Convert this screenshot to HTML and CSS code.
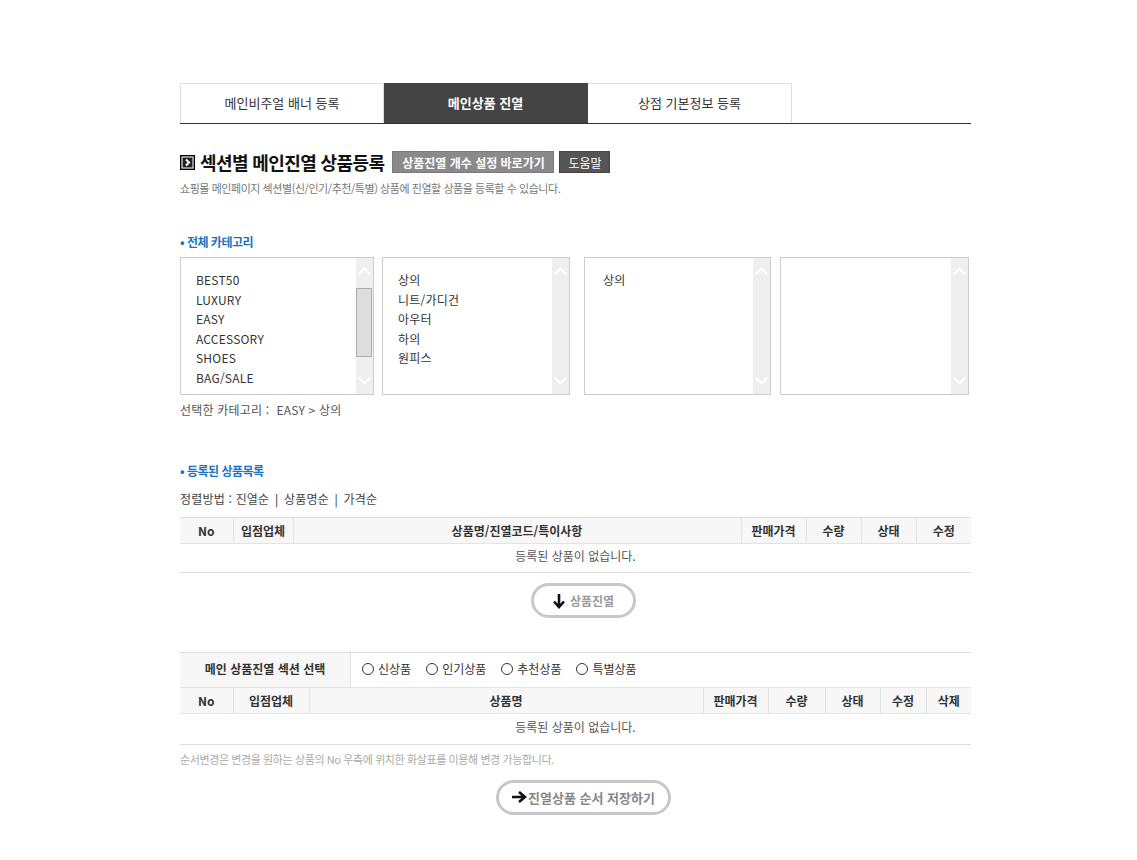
FILE: index.html
```html
<!DOCTYPE html>
<html lang="ko">
<head>
<meta charset="utf-8">
<title>섹션별 메인진열 상품등록</title>
<link rel="stylesheet" href="styles.css">
</head>
<body>
<div class="wrap">
  <div class="tabs">
    <div class="tab">메인비주얼 배너 등록</div>
    <div class="tab active">메인상품 진열</div>
    <div class="tab">상점 기본정보 등록</div>
  </div>

  <div class="title-row">
    <span class="title-icon"><svg width="15" height="15" viewBox="0 0 15 15"><rect x="0.5" y="0.5" width="14" height="14" fill="#222" stroke="#000"/><rect x="2" y="2" width="11" height="11" fill="none" stroke="#fff" stroke-width="1"/><path d="M6 4.5 L9 7.5 L6 10.5" fill="none" stroke="#fff" stroke-width="2"/></svg></span>
    <h1 class="title">섹션별 메인진열 상품등록</h1>
    <span class="btn btn-gray">상품진열 개수 설정 바로가기</span>
    <span class="btn btn-dark">도움말</span>
  </div>
  <p class="desc">쇼핑몰 메인페이지 섹션별(신/인기/추천/특별) 상품에 진열할 상품을 등록할 수 있습니다.</p>

  <h2 class="sub">• 전체 카테고리</h2>
  <div class="cats">
    <div class="lbox w1">
      <ul class="items">
        <li>BEST50</li><li>LUXURY</li><li>EASY</li><li>ACCESSORY</li><li>SHOES</li><li>BAG/SALE</li>
      </ul>
      <div class="sbar"><span class="up"></span><span class="thumb"></span><span class="down"></span></div>
    </div>
    <div class="lbox w2">
      <ul class="items">
        <li>상의</li><li>니트/가디건</li><li>아우터</li><li>하의</li><li>원피스</li>
      </ul>
      <div class="sbar"><span class="up"></span><span class="down"></span></div>
    </div>
    <div class="lbox w3">
      <ul class="items">
        <li>상의</li>
      </ul>
      <div class="sbar"><span class="up"></span><span class="down"></span></div>
    </div>
    <div class="lbox w4">
      <ul class="items"></ul>
      <div class="sbar"><span class="up"></span><span class="down"></span></div>
    </div>
  </div>
  <p class="selected">선택한 카테고리 : &nbsp;EASY &gt; 상의</p>

  <h2 class="sub sub2">• 등록된 상품목록</h2>
  <p class="sort">정렬방법 : 진열순 <span class="bar">|</span> 상품명순 <span class="bar">|</span> 가격순</p>

  <table class="grid g1">
    <colgroup><col style="width:53px"><col style="width:60px"><col><col style="width:65px"><col style="width:55px"><col style="width:55px"><col style="width:55px"></colgroup>
    <thead><tr><th>No</th><th>입점업체</th><th>상품명/진열코드/특이사항</th><th>판매가격</th><th>수량</th><th>상태</th><th>수정</th></tr></thead>
    <tbody><tr><td colspan="7" class="empty">등록된 상품이 없습니다.</td></tr></tbody>
  </table>

  <div class="btn-row">
    <span class="pill pill1"><svg width="14" height="16" viewBox="0 0 14 16"><path d="M7 1 V13 M2 8.5 L7 14 L12 8.5" fill="none" stroke="#111" stroke-width="2.6"/></svg>상품진열</span>
  </div>

  <div class="section-select">
    <div class="sel-label">메인 상품진열 섹션 선택</div>
    <div class="radios">
      <label><span class="radio"></span>신상품</label>
      <label><span class="radio"></span>인기상품</label>
      <label><span class="radio"></span>추천상품</label>
      <label><span class="radio"></span>특별상품</label>
    </div>
  </div>
  <table class="grid g2">
    <colgroup><col style="width:53px"><col style="width:76px"><col><col style="width:65px"><col style="width:57px"><col style="width:55px"><col style="width:46px"><col style="width:45px"></colgroup>
    <thead><tr><th>No</th><th>입점업체</th><th>상품명</th><th>판매가격</th><th>수량</th><th>상태</th><th>수정</th><th>삭제</th></tr></thead>
    <tbody><tr><td colspan="8" class="empty">등록된 상품이 없습니다.</td></tr></tbody>
  </table>
  <p class="note">순서변경은 변경을 원하는 상품의 No 우측에 위치한 화살표를 이용해 변경 가능합니다.</p>

  <div class="btn-row btn-row2">
    <span class="pill pill2"><svg width="16" height="14" viewBox="0 0 16 14"><path d="M1 7 H13 M8 2 L14 7 L8 12" fill="none" stroke="#111" stroke-width="2.6"/></svg>진열상품 순서 저장하기</span>
  </div>
</div>
</body>
</html>
```

FILE: styles.css
```css
* { box-sizing: border-box; }
html, body { margin: 0; padding: 0; background: #fff; }
body {
  font-family: "Noto Sans CJK KR", "Noto Sans", "Liberation Sans", sans-serif;
  font-size: 12px;
  color: #333;
}
.wrap {
  width: 791px;
  margin-left: 180px;
  padding-top: 83px;
}

/* tabs */
.tabs {
  display: flex;
  border-bottom: 1px solid #333;
}
.tab {
  width: 204px;
  height: 40px;
  line-height: 38px;
  text-align: center;
  border: 1px solid #ddd;
  border-bottom: 0;
  font-size: 13px;
  color: #333;
}
.tab + .tab { border-left: 0; }
.tab.active {
  background: #444;
  border-color: #444;
  color: #fff;
  font-weight: bold;
}

/* title */
.title-row {
  display: flex;
  align-items: center;
  margin-top: 27px;
  height: 22px;
}
.title-icon { width: 15px; height: 15px; display: flex; margin-right: 5px; }
.title {
  margin: 0 8px 0 0;
  font-size: 18px;
  font-weight: bold;
  letter-spacing: -0.6px;
  color: #111;
  line-height: 22px;
}
.btn {
  display: inline-block;
  height: 22px;
  line-height: 21px;
  color: #fff;
  font-size: 12px;
  font-weight: bold;
  margin-right: 5px;
  border: 1px solid transparent;
  text-align: center;
}
.btn-gray { background: #8a8a8a; border-color: #7a7a7a; width: 162px; }
.btn-dark { background: #555; border-color: #444; width: 51px; font-weight: normal; }
.desc {
  margin: 7px 0 0;
  font-size: 11px;
  color: #777;
  letter-spacing: -0.45px;
}

/* sub headings */
.sub {
  margin: 38px 0 0;
  font-size: 12px;
  font-weight: bold;
  color: #1a73c0;
  letter-spacing: -0.5px;
  line-height: 16px;
}

/* category boxes */
.cats {
  display: flex;
  margin-top: 7px;
  height: 138px;
}
.lbox {
  display: flex;
  border: 1px solid #ccc;
  height: 138px;
  background: #fff;
}
.w1 { width: 194px; margin-right: 8px; }
.w2 { width: 188px; margin-right: 14px; }
.w3 { width: 187px; margin-right: 9px; }
.w4 { width: 189px; }
.items {
  list-style: none;
  margin: 0;
  padding: 12px 0 0 15px;
  flex: 1;
}
.items li {
  height: 19.5px;
  line-height: 19.5px;
  color: #333;
  letter-spacing: 0.2px;
}
.w3 .items { padding-left: 18px; }
.sbar {
  width: 17px;
  background: #efefef;
  position: relative;
}
.sbar .up, .sbar .down {
  position: absolute;
  left: 4px;
  width: 9px;
  height: 9px;
  border-left: 2px solid #fff;
  border-top: 2px solid #fff;
}
.sbar .up { top: 11px; transform: rotate(45deg); }
.sbar .down { bottom: 11px; transform: rotate(225deg); }
.sbar .thumb {
  position: absolute;
  left: 0;
  top: 30px;
  width: 16px;
  height: 69px;
  background: #ddd;
  border: 1px solid #aaa;
}
.selected {
  margin: 7px 0 0;
  color: #555;
  line-height: 16px;
  letter-spacing: 0.2px;
}

.sub2 { margin-top: 45px; }
.sort {
  margin: 12px 0 0;
  color: #444;
  line-height: 16px;
  letter-spacing: 0.2px;
}
.sort .bar { color: #222; padding: 0 2px; }

/* tables */
.grid {
  width: 100%;
  border-collapse: collapse;
  table-layout: fixed;
}
.g1 { margin-top: 10px; }
.grid th {
  height: 26px;
  background: #f7f7f7;
  border-top: 1px solid #ddd;
  border-bottom: 1px solid #e3e3e3;
  border-left: 1px solid #e3e3e3;
  font-weight: bold;
  color: #333;
  font-size: 12px;
  padding: 0;
}
.grid th:first-child { border-left: 0; }
.grid td.empty {
  height: 29px;
  text-align: center;
  color: #555;
  border-bottom: 1px solid #ddd;
  padding: 0 0 5px;
}

.btn-row {
  display: flex;
  justify-content: center;
  margin-top: 10px;
}
.pill {
  display: flex;
  align-items: center;
  justify-content: center;
  height: 35px;
  border: 3px solid #c8c8c8;
  border-radius: 18px;
  background: #fff;
  color: #999;
  font-weight: bold;
  font-size: 12px;
}
.pill svg { margin-right: 4px; }
.pill1 { width: 105px; margin-left: 15px; }
.pill2 { width: 175px; margin-left: 15px; font-size: 13px; color: #888; }
.pill2 svg { margin-right: 1px; }

/* section select */
.section-select {
  display: flex;
  margin-top: 34px;
  border-top: 1px solid #ddd;
  height: 36px;
  border-bottom: 1px solid #e3e3e3;
}
.sel-label {
  width: 171px;
  background: #f7f7f7;
  border-right: 1px solid #e3e3e3;
  text-align: center;
  line-height: 32px;
  font-weight: bold;
  color: #333;
}
.radios {
  display: flex;
  align-items: center;
  padding-left: 11px;
  padding-bottom: 3px;
  gap: 15px;
}
.radios label {
  display: flex;
  align-items: center;
  color: #333;
}
.radio {
  width: 12px;
  height: 12px;
  border: 1px solid #333;
  border-radius: 50%;
  margin-right: 4px;
}
.g2 th { border-top: 0; height: 25px; }
.g2 td.empty { height: 31px; padding-bottom: 5px; }

.note {
  margin: 6px 0 0;
  font-size: 11px;
  color: #aaa;
  letter-spacing: -0.4px;
}
.btn-row2 { margin-top: 13px; }
```
